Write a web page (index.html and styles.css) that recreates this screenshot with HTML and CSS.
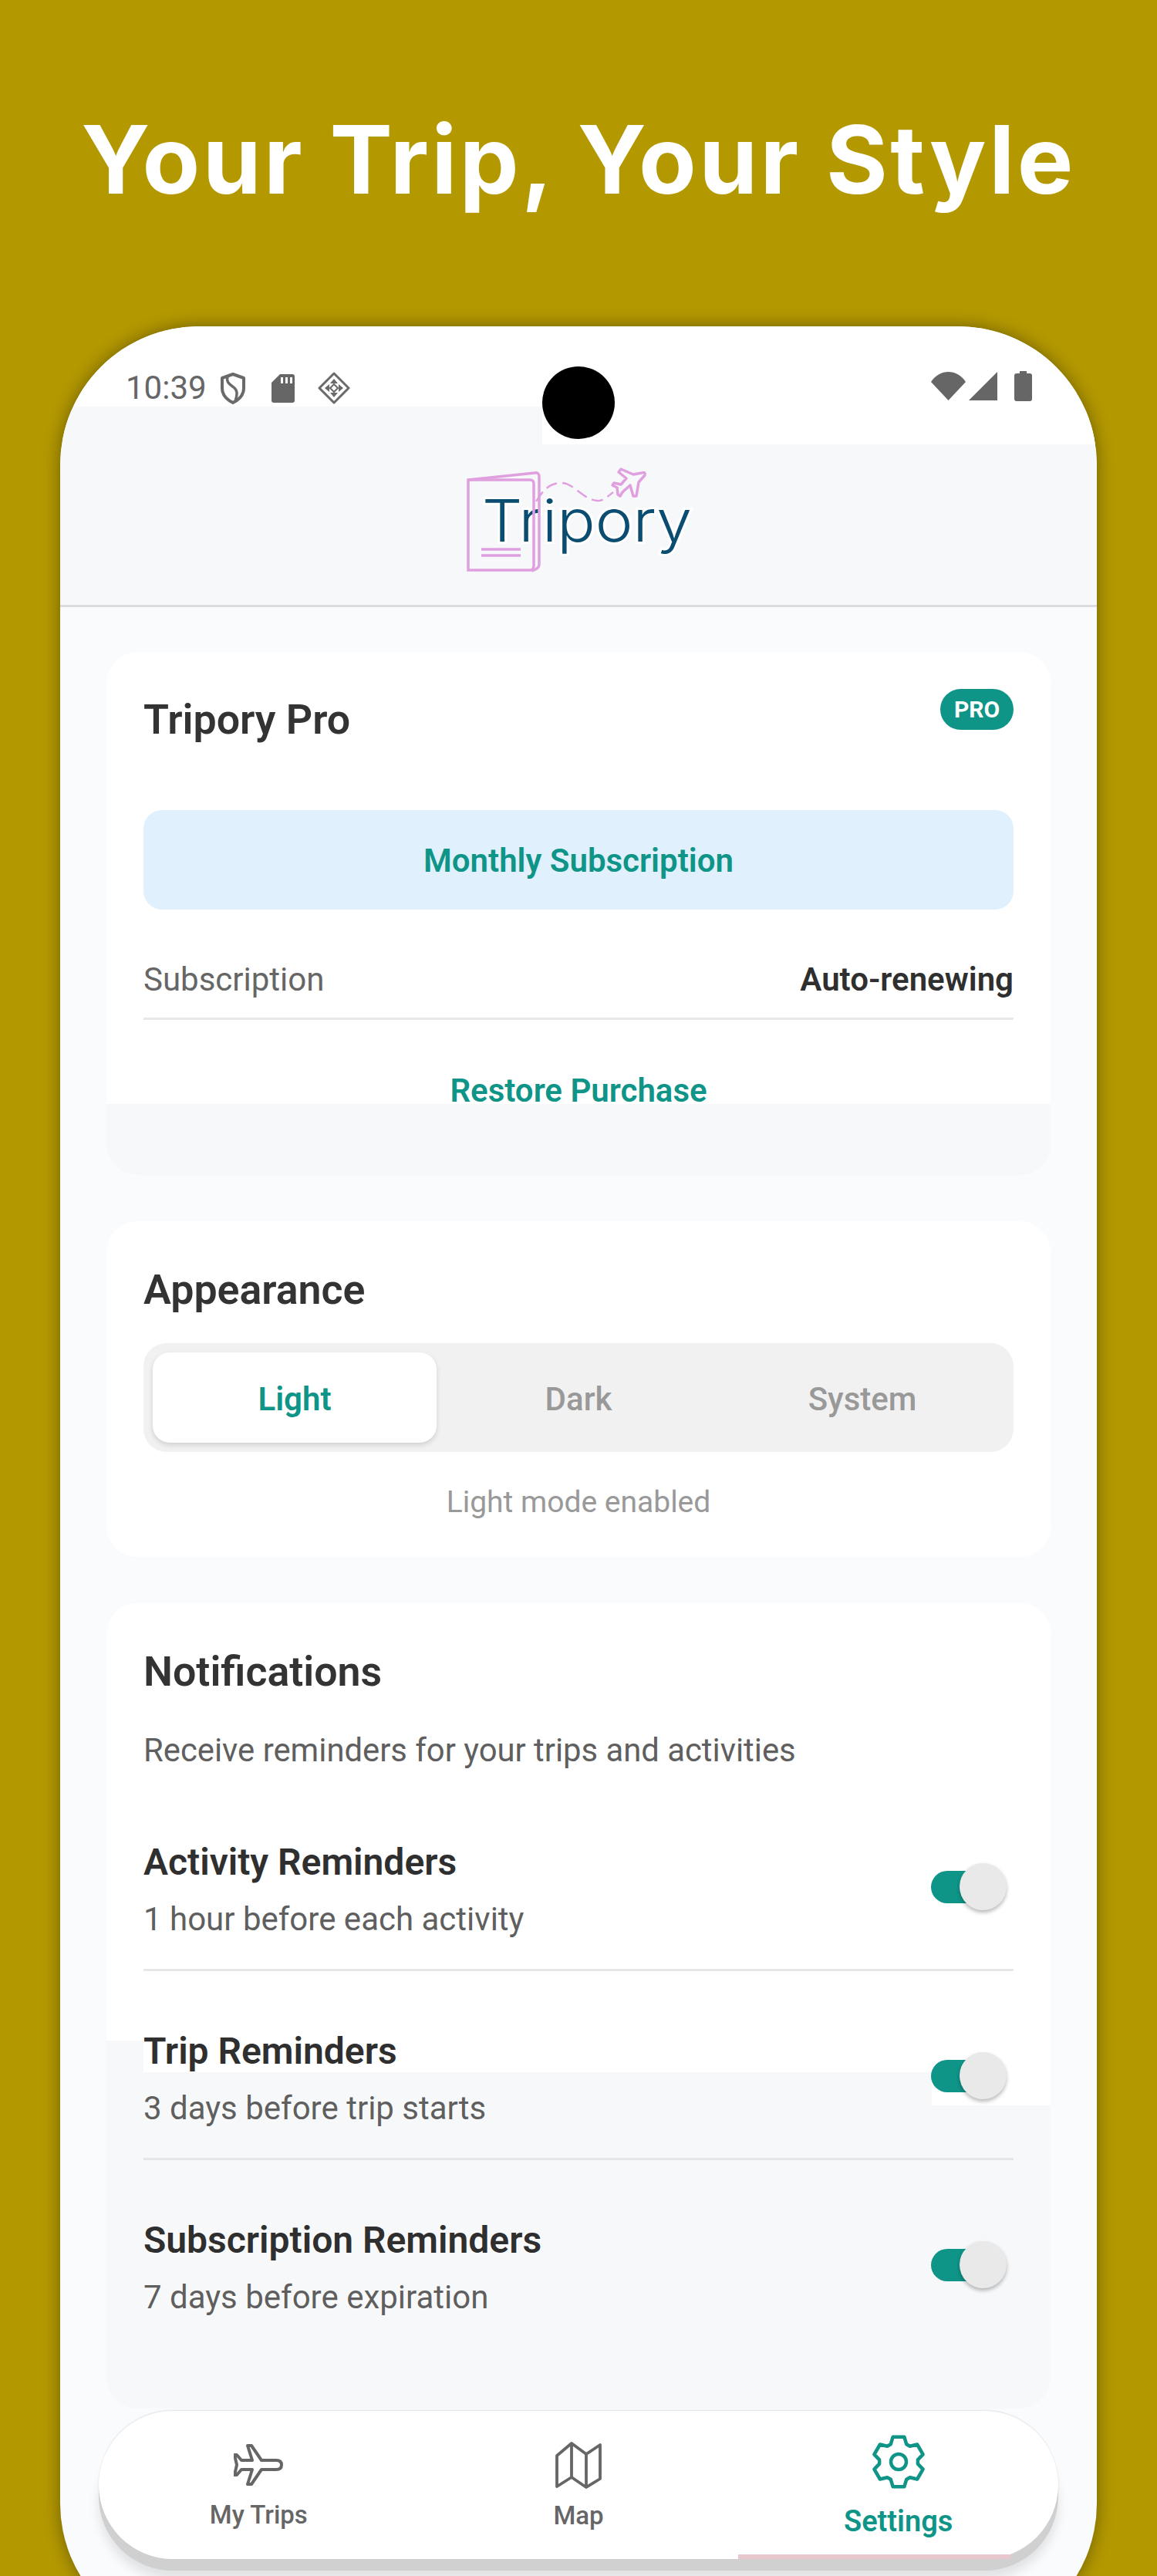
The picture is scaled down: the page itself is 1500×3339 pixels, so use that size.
FILE: index.html
```html
<!DOCTYPE html>
<html lang="en">
<head>
<meta charset="utf-8">
<title>Tripory</title>
<link rel="stylesheet" href="styles.css">
</head>
<body>
<h1 class="headline">Your Trip, Your Style</h1>
<div class="phone">
  <div class="status">
    <div class="status-left">
      <span class="clock">10:39</span>
      <svg class="ic-shield" viewBox="0 0 34 41"><path d="M17 2 L31 7 V20 C31 29 25 35 17 39 C9 35 3 29 3 20 V7 Z" fill="none" stroke="#6a6a6a" stroke-width="4" stroke-linejoin="round"/><path d="M10 5 C8 13 13 15 18 19 C23 23 23 28 20 37" fill="none" stroke="#6a6a6a" stroke-width="3.5"/></svg>
      <svg class="ic-sd" viewBox="0 0 30 37"><path d="M11 0 H27 Q30 0 30 3 V34 Q30 37 27 37 H3 Q0 37 0 34 V11 Z" fill="#666"/><path d="M12 4h3v8h-3zM18 4h3v8h-3zM24 4h3v8h-3z" fill="#fff"/></svg>
      <svg class="ic-diamond" viewBox="0 0 42 42"><path d="M21 2 L40 21 L21 40 L2 21 Z" fill="none" stroke="#6a6a6a" stroke-width="3" stroke-linejoin="round"/><path d="M21 9 L26 15 H16 Z M21 33 L26 27 H16 Z M9 21 L15 16 V26 Z M33 21 L27 16 V26 Z" fill="#6a6a6a"/><path d="M21 16 L26 21 L21 26 L16 21 Z" fill="none" stroke="#6a6a6a" stroke-width="2"/></svg>
    </div>
    <div class="status-right">
      <svg class="ic-wifi" viewBox="0 0 45 37"><path d="M0 13 C6 4 14 0 22.5 0 C31 0 39 4 45 13 L22.5 37 Z" fill="#666"/></svg>
      <svg class="ic-signal" viewBox="0 0 37 37"><path d="M37 0 V37 H0 Z" fill="#666"/></svg>
      <svg class="ic-battery" viewBox="0 0 23 39"><path d="M7 0 H16 V3 H20 Q23 3 23 6 V36 Q23 39 20 39 H3 Q0 39 0 36 V6 Q0 3 3 3 H7 Z" fill="#666"/></svg>
    </div>
  </div>
  <div class="camera"></div>
  <header class="appbar">
    <div class="status-patch"></div>
    <svg class="logo" viewBox="0 0 300 140">
      <text class="logo-text" x="21" y="97" textLength="272" lengthAdjust="spacingAndGlyphs">Tripory</text>
      <g fill="none" stroke="#e09fdf" stroke-width="3.5">
        <path d="M3 17 L89 8 Q95 7 95 13 V127 Q95 132 85 135"/>
        <path d="M3 17 H83 Q88 17 88 22 V128 Q88 134 83 134 H3 Z"/>
        <path d="M20 107 H71 M20 115 H71"/>
        <path d="M91 45 C100 30 108 22 122 21 C140 20 150 42 170 44 C178 45 184 38 191 33" stroke-width="2.4" stroke-dasharray="15 7"/>
        <path d="M228 8 Q233 6 232 11 L224 20 L221 38 L217 38 L213 24 L205 31 L203 33 L200 38 L197 36 L196 27 L190 24 L192 21 L201 23 L208 15 L198 7 L201 3 L217 10 Z" stroke-linejoin="round"/>
      </g>
    </svg>
  </header>

  <main class="content">
    <section class="card card-pro">
      <div class="pro-top">
        <div class="pro-head">
          <h2 class="title">Tripory Pro</h2>
          <span class="badge">PRO</span>
        </div>
        <div class="plan">Monthly Subscription</div>
        <div class="sub-row"><span class="sub-label">Subscription</span><span class="sub-value">Auto-renewing</span></div>
        <div class="restore">Restore Purchase</div>
      </div>
    </section>

    <section class="card card-look">
      <h2 class="title">Appearance</h2>
      <div class="segment">
        <div class="seg seg-on">Light</div>
        <div class="seg">Dark</div>
        <div class="seg">System</div>
      </div>
      <p class="seg-note">Light mode enabled</p>
    </section>

    <section class="card card-notify">
      <div class="patch"></div>
      <h2 class="title">Notifications</h2>
      <p class="notify-intro">Receive reminders for your trips and activities</p>
      <div class="row row-line">
        <div class="row-text"><div class="row-title">Activity Reminders</div><div class="row-sub">1 hour before each activity</div></div>
        <div class="toggle"><span class="track"></span><span class="thumb"></span></div>
      </div>
      <div class="row row-line">
        <div class="row-text"><div class="row-title">Trip Reminders</div><div class="row-sub">3 days before trip starts</div></div>
        <div class="toggle"><span class="track"></span><span class="thumb"></span></div>
      </div>
      <div class="row">
        <div class="row-text"><div class="row-title">Subscription Reminders</div><div class="row-sub">7 days before expiration</div></div>
        <div class="toggle"><span class="track"></span><span class="thumb"></span></div>
      </div>
    </section>
  </main>

  <nav class="tabbar">
    <div class="tab">
      <svg class="ic-plane" viewBox="0 0 64 54"><path d="M62 27 Q62 21 55 21 H36 L23 2 H18 L24 21 H10 L4 14 H1 L4 27 L1 40 H4 L10 33 H24 L18 52 H23 L36 33 H55 Q62 33 62 27 Z" fill="none" stroke="#666" stroke-width="4" stroke-linejoin="round"/></svg>
      <span class="tab-label">My Trips</span>
    </div>
    <div class="tab">
      <svg class="ic-map" viewBox="-2 -2 60 62"><path d="M0 16 L19 0 L38 14 L56 2 V46 L38 57 L19 44 L0 56 Z M19 0 V44 M38 14 V57" fill="none" stroke="#666" stroke-width="3.8" stroke-linejoin="round"/></svg>
      <span class="tab-label">Map</span>
    </div>
    <div class="tab tab-on">
      <svg class="ic-gear" viewBox="-35 -35 70 70"><path d="M-10.2 -22.8 L-7.4 -32.2 H7.4 L10.2 -22.8 L14.7 -20.2 L24.1 -22.5 L31.6 -9.6 L24.9 -2.6 V2.6 L31.6 9.6 L24.1 22.5 L14.7 20.2 L10.2 22.8 L7.4 32.2 H-7.4 L-10.2 22.8 L-14.7 20.2 L-24.1 22.5 L-31.6 9.6 L-24.9 2.6 V-2.6 L-31.6 -9.6 L-24.1 -22.5 L-14.7 -20.2 Z" fill="none" stroke="#0f9488" stroke-width="4.5" stroke-linejoin="round"/><circle r="10" fill="none" stroke="#0f9488" stroke-width="4.5"/></svg>
      <span class="tab-label">Settings</span>
      <span class="tab-mark"></span>
    </div>
  </nav>
</div>
</body>
</html>
```
FILE: styles.css
```css
* { box-sizing: border-box; }
html, body { margin: 0; padding: 0; }
body {
  height: 3339px;
  overflow: hidden;
  background: #b39800;
  font-family: Roboto, "Liberation Sans", sans-serif;
  color: #2f2f2f;
}
h1, h2, p { margin: 0; font-weight: inherit; }

.headline {
  height: 423px;
  padding-top: 133px;
  text-align: center;
  font-family: Inter, "Liberation Sans", sans-serif;
  font-size: 122px;
  letter-spacing: 3.4px;
  line-height: 148px;
  font-weight: 700;
  color: #fff;
  white-space: nowrap;
}

.phone {
  position: relative;
  width: 1344px;
  height: 3002px;
  margin-left: 78px;
  border-radius: 180px;
  background: #f9fbfd;
  overflow: hidden;
  box-shadow: 0 0 20px 2px rgba(0,0,0,.32);
}

.status {
  height: 104px;
  background: #fff;
  padding: 58px 84px 0 85px;
  display: flex;
  justify-content: space-between;
  align-items: flex-start;
}
.status-left, .status-right { display: flex; align-items: center; }
.clock { font-size: 42px; line-height: 44px; color: #666; width: 122px; }
.ic-shield { width: 34px; height: 41px; margin-right: 33px; }
.ic-sd { width: 30px; height: 37px; margin-right: 30px; }
.ic-diamond { width: 42px; height: 42px; }
.ic-wifi { width: 45px; height: 37px; margin-right: 4px; }
.ic-signal { width: 37px; height: 37px; margin-right: 22px; }
.ic-battery { width: 23px; height: 39px; }

.camera {
  position: absolute;
  left: 625px;
  top: 52px;
  width: 94px;
  height: 94px;
  border-radius: 50%;
  background: #000;
  z-index: 3;
}

.appbar {
  position: relative;
  height: 260px;
  background: #f7f8fa;
  border-bottom: 3px solid #dcdde0;
  padding: 78px 0 0 526px;
}
.status-patch {
  position: absolute;
  left: 625px;
  right: 0;
  top: 0;
  height: 49px;
  background: #fff;
}
.logo { position: relative; display: block; width: 300px; height: 140px; }
.logo-text {
  font-family: Inter, "Open Sans", sans-serif;
  font-size: 76px;
  font-weight: 300;
  fill: #0b4d70;
  stroke: #fff;
  stroke-width: 6px;
  paint-order: stroke;
}

.content {
  padding: 58px 60px 0;
  display: flex;
  flex-direction: column;
  gap: 60px;
}

.card {
  position: relative;
  background: #fff;
  border-radius: 40px;
  overflow: hidden;
}
.title {
  position: relative;
  font-size: 53.7px;
  line-height: 62px;
  font-weight: 600;
  color: #333;
}

.card-pro { height: 678px; background: #f7f8fa; }
.pro-top { height: 586px; background: #fff; padding: 57px 48px 0; overflow: hidden; }
.pro-head { display: flex; justify-content: space-between; align-items: flex-start; height: 148px; }
.badge {
  margin-top: -9px;
  width: 95px;
  height: 53px;
  border-radius: 27px;
  background: #0f9488;
  color: #fff;
  font-size: 30px;
  font-weight: 700;
  line-height: 53px;
  text-align: center;
}
.plan {
  height: 129px;
  border-radius: 24px;
  background: #e0f0fd;
  color: #0f9488;
  font-size: 42px;
  font-weight: 600;
  line-height: 132px;
  text-align: center;
}
.sub-row {
  height: 143px;
  padding-top: 66px;
  border-bottom: 3px solid #e8e8e8;
  display: flex;
  justify-content: space-between;
  font-size: 42px;
  line-height: 50px;
}
.sub-label { color: #666; }
.sub-value { font-weight: 600; color: #2f2f2f; }
.restore {
  margin-top: 67px;
  text-align: center;
  color: #0f9488;
  font-size: 42px;
  line-height: 50px;
  font-weight: 600;
}

.card-look { height: 435px; padding: 58px 48px 0; }
.segment {
  margin-top: 38px;
  height: 141px;
  padding: 12px;
  border-radius: 30px;
  background: #f1f1f1;
  display: grid;
  grid-template-columns: repeat(3, 1fr);
}
.seg {
  height: 117px;
  font-size: 42px;
  font-weight: 500;
  line-height: 121px;
  text-align: center;
  color: #999;
  border-radius: 22px;
}
.seg-on {
  background: #fff;
  color: #0f9488;
  font-weight: 600;
  box-shadow: 0 3px 6px rgba(0,0,0,.14);
}
.seg-note {
  margin-top: 42px;
  text-align: center;
  font-size: 39px;
  line-height: 46px;
  color: #999;
}

.card-notify { height: 1044px; padding: 58px 48px 0; }
.patch {
  position: absolute;
  left: 0;
  right: 0;
  top: 567px;
  bottom: 0;
  background: #f7f8fa;
  clip-path: polygon(0 0, 48px 0, 48px 41px, 1070px 41px, 1070px 84px, 100% 84px, 100% 100%, 0 100%);
}
.notify-intro {
  position: relative;
  margin-top: 46px;
  font-size: 41.8px;
  line-height: 50px;
  color: #5f5f5f;
}
.row {
  position: relative;
  height: 245px;
  display: flex;
  justify-content: space-between;
  align-items: flex-start;
}
.notify-intro + .row { margin-top: 16px; }
.row-line::after {
  content: "";
  position: absolute;
  left: 0;
  right: 0;
  bottom: 0;
  height: 3px;
  background: #e6e6e6;
}
.row-text { padding-top: 76px; text-shadow: 0 0 4px #fff; }
.row-title { font-size: 48px; line-height: 56px; font-weight: 600; color: #2f2f2f; }
.row-sub { margin-top: 21px; font-size: 42px; line-height: 50px; color: #5f5f5f; }
.toggle {
  position: relative;
  width: 98px;
  height: 61px;
  margin-top: 105px;
  margin-right: 9px;
}
.track {
  position: absolute;
  left: 0;
  top: 10px;
  width: 80px;
  height: 42px;
  border-radius: 21px;
  background: #0f9488;
}
.thumb {
  position: absolute;
  right: 0;
  top: 0;
  width: 61px;
  height: 61px;
  border-radius: 50%;
  background: #e9e9e9;
  box-shadow: 0 3px 5px rgba(0,0,0,.28);
}

.tabbar {
  position: absolute;
  left: 50px;
  top: 2702px;
  width: 1244px;
  height: 192px;
  border-radius: 96px;
  background: #fff;
  display: grid;
  grid-template-columns: repeat(3, 1fr);
  box-shadow: 0 -1px 2px rgba(0,0,0,.1), 0 15px 0 #d0d0d0, 0 26px 14px rgba(0,0,0,.1);
}
.tab {
  position: relative;
  display: flex;
  flex-direction: column;
  align-items: center;
  color: #666;
}
.ic-plane { width: 64px; height: 54px; margin-top: 43px; }
.ic-map { width: 60px; height: 62px; margin-top: 40px; }
.ic-gear { width: 70px; height: 70px; margin-top: 31px; }
.tab-label { font-size: 33px; font-weight: 500; line-height: 38px; margin-top: 19px; }
.ic-map + .tab-label { margin-top: 15px; }
.tab-on .tab-label { font-size: 38px; font-weight: 600; color: #0f9488; margin-top: 20px; line-height: 44px; }
.tab-mark {
  position: absolute;
  left: 0;
  right: 62px;
  bottom: 0;
  height: 6px;
  background: #e9c8cd;
}
```
